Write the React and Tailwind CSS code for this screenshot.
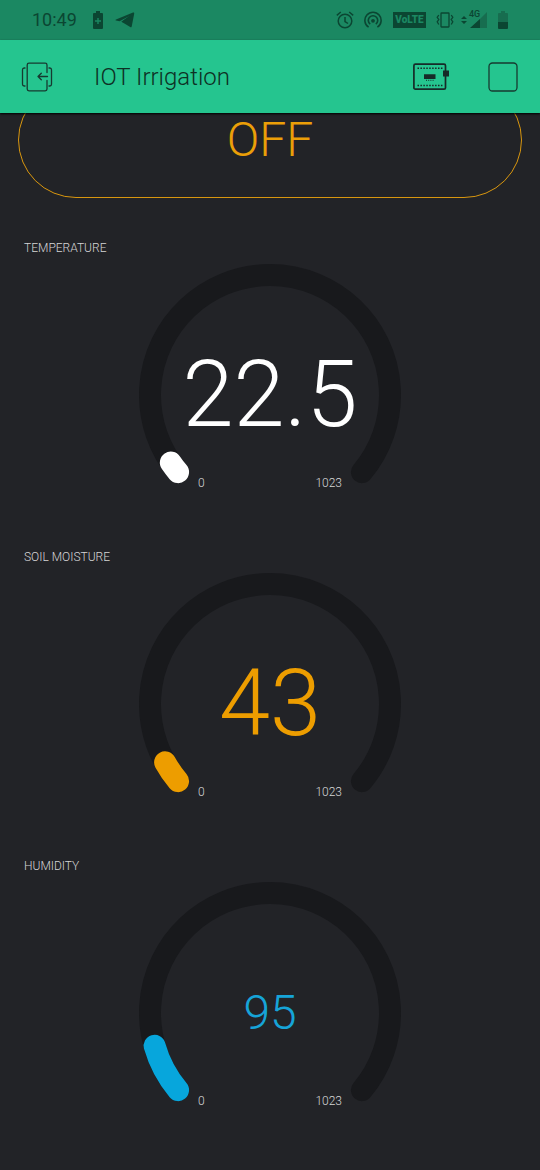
import React from "react";

const CENTER = 131;
const RADIUS = 120;
const SWEEP = 260;
const START = 140;

function pointAt(degrees) {
  const a = (degrees * Math.PI) / 180;
  return `${(CENTER + RADIUS * Math.cos(a)).toFixed(2)} ${(CENTER + RADIUS * Math.sin(a)).toFixed(2)}`;
}

function arc(sweep) {
  return `M${pointAt(START)}A${RADIUS} ${RADIUS} 0 ${sweep > 180 ? 1 : 0} 1 ${pointAt(START + sweep)}`;
}

function Gauge({ label, value, min = 0, max = 1023, color, valueClass }) {
  const filled = (SWEEP * (value - min)) / (max - min);
  return (
    <section className="flex flex-col gap-2">
      <h2 className="px-6 text-xs leading-4 font-light text-[#d5d5d6]">{label}</h2>
      <div className="mx-auto grid w-[262px]">
        <svg viewBox="0 0 262 262" className="col-start-1 row-start-1 w-full" fill="none" strokeWidth="22" strokeLinecap="round" aria-hidden="true">
          <path d={arc(SWEEP)} stroke="#18191c" />
          <path d={arc(filled)} stroke={color} />
        </svg>
        <p className={`col-start-1 row-start-1 self-center text-center leading-none font-light ${valueClass}`}>{value}</p>
        <div className="col-start-1 row-start-1 mb-[35px] flex justify-between self-end px-[59px] text-xs leading-4 font-light text-[#d5d5d6]">
          <span>{min}</span>
          <span>{max}</span>
        </div>
      </div>
    </section>
  );
}

function StatusBar() {
  return (
    <div className="flex h-10 items-center bg-[#1b8862] pr-8 pl-8 text-[#0b4632]">
      <span className="text-lg leading-6">10:49</span>
      <svg className="ml-4 h-[18px] w-[10px]" viewBox="0 0 10 18" fill="currentColor" aria-hidden="true">
        <path fillRule="evenodd" d="M3 0h4v2h2a1 1 0 0 1 1 1v14a1 1 0 0 1-1 1H1a1 1 0 0 1-1-1V3a1 1 0 0 1 1-1h2zM4.3 7v2.3H2v1.4h2.3V13h1.4v-2.3H8V9.3H5.7V7z" />
      </svg>
      <svg className="ml-3 h-4 w-5" viewBox="0 0 20 16" fill="currentColor" aria-hidden="true">
        <path d="M1 7.600 18 .6c.8-.3 1.400.2 1.200 1.200l-2.500 12.600c-.2.9-.8 1.100-1.500.7L6.500 9.700 14.500 3.900 4.600 9.200 1 8.500c-.7-.2-.7-.6 0-.9z" />
        <path d="M6.500 9.700 14.500 3.900 8.500 10.500z" />
      </svg>

      <div className="ml-auto flex items-center">
        <svg className="h-[18px] w-[18px]" viewBox="0 0 18 18" fill="none" stroke="currentColor" strokeWidth="1.500" aria-hidden="true">
          <circle cx="9" cy="10" r="6.800" />
          <path d="M.8 4.300 4.800 1M17.200 4.300 13.200 1M9 6v4.500l3 2" />
        </svg>
        <svg className="ml-[10px] h-[18px] w-[18px]" viewBox="0 0 18 18" fill="none" stroke="currentColor" strokeWidth="1.600" aria-hidden="true">
          <path d="M4.600 16.200a8.100 8.100 0 1 1 8.800 0M6.200 13.200a4.700 4.700 0 1 1 5.600 0" />
          <circle cx="9" cy="9.800" r="1.900" fill="currentColor" stroke="none" />
        </svg>
        <span className="ml-[11px] flex h-4 w-[33px] items-center justify-center bg-[#0b4632] text-[10px] leading-none font-black text-[#1b8862]">
          VoLTE
        </span>
        <svg className="ml-[10px] h-[18px] w-[18px]" viewBox="0 0 18 18" fill="none" stroke="currentColor" strokeWidth="1.300" aria-hidden="true">
          <rect x="5" y="2" width="8" height="14" rx="0.500" />
          <path d="m2.800 4-1.600 2.300 1.600 2.200-1.600 2.300L2.800 13.500M15.200 4l1.600 2.300-1.600 2.200 1.600 2.300-1.600 2.700" />
        </svg>
        <svg className="ml-[7px] h-2 w-[6px]" viewBox="0 0 6 8" fill="currentColor" aria-hidden="true">
          <path d="m3 0 3 3H0zM3 8 0 5h6z" />
        </svg>
        <span className="relative ml-[2px] block h-[18px] w-[18px]">
          <svg className="h-full w-full" viewBox="0 0 18 18" aria-hidden="true">
            <path d="M18 1v16H2z" fill="#176d4f" />
            <path d="M11 8v9H1z" fill="currentColor" />
          </svg>
          <span className="absolute -top-px left-0 bg-[#1b8862] text-[9px] leading-[9px] font-medium">4G</span>
        </span>
        <svg className="ml-[11px] h-[18px] w-[10px]" viewBox="0 0 10 18" aria-hidden="true">
          <path d="M3 0h4v2h2a1 1 0 0 1 1 1v8H0V3a1 1 0 0 1 1-1h2z" fill="#176d4f" />
          <path d="M0 11h10v6a1 1 0 0 1-1 1H1a1 1 0 0 1-1-1z" fill="currentColor" />
        </svg>
      </div>
    </div>
  );
}

function AppBar() {
  return (
    <header className="relative flex h-[73px] items-center bg-[#25c58f] pr-[22px] pl-[21px] text-[#173a30] shadow-[0_1px_2px_#000000]">
      <button type="button" aria-label="Exit project">
        <svg className="h-8 w-8" viewBox="0 0 32 32" fill="none" stroke="currentColor" strokeWidth="1.300" strokeLinecap="round" strokeLinejoin="round" aria-hidden="true">
          <path d="M26 11.500V4a1.800 1.800 0 0 0-1.800-1.800H8A1.800 1.800 0 0 0 6.200 4v24A1.800 1.800 0 0 0 8 29.800h16.200A1.800 1.800 0 0 0 26 28v-8.500" />
          <path d="M4 7H3.200A1.800 1.800 0 0 0 1.500 8.800v14.400A1.800 1.800 0 0 0 3.200 25H4M28 7h.8a1.800 1.800 0 0 1 1.700 1.800v14.400a1.800 1.800 0 0 1-1.700 1.800H28" />
          <path d="M26.500 15.500H17M20.300 12.200 17 15.500l3.300 3.300" />
        </svg>
      </button>
      <h1 className="ml-[41px] text-2xl leading-8 font-light text-[#0e3024]">IOT Irrigation</h1>
      <button type="button" aria-label="Devices" className="ml-auto">
        <svg className="h-7 w-[37px]" viewBox="0 0 37 28" fill="none" stroke="#162b28" aria-hidden="true">
          <rect x="0.900" y="1.200" width="31.600" height="25" rx="1.500" strokeWidth="1.700" />
          <path d="M4.500 5.200h25M4.500 22.500h25" strokeWidth="1.600" strokeDasharray="1.500 1.430" />
          <path d="M13 17.300h8" strokeWidth="1" strokeDasharray="1 1.200" />
          <path d="M11 11.200h11.500v4.800H11zM30 7.500h6v6h-6z" fill="#162b28" stroke="none" />
        </svg>
      </button>
      <button type="button" aria-label="Stop" className="ml-[38px]">
        <svg className="h-[30px] w-[30px]" viewBox="0 0 30 30" fill="none" stroke="#173a30" strokeWidth="1.300" aria-hidden="true">
          <rect x="1" y="1" width="28" height="28" rx="3.500" />
        </svg>
      </button>
    </header>
  );
}

export default function App() {
  return (
    <div className="flex min-h-screen flex-col bg-[#222327] font-['Roboto','Liberation_Sans',sans-serif]">
      <StatusBar />
      <AppBar />
      <main className="flex-1 overflow-hidden">
        {/* The switch is scrolled partly beneath the app bar. */}
        <div className="-mt-[31px] px-[18px]">
          <button type="button" className="h-[116px] w-full rounded-full border border-[#d8960f] text-5xl leading-none font-light text-[#eb9f08]">
            OFF
          </button>
        </div>
        <div className="mt-[42px] flex flex-col gap-[23px]">
          <Gauge label="TEMPERATURE" value={22.5} color="#ffffff" valueClass="text-[92px] text-white" />
          <Gauge label="SOIL MOISTURE" value={43} color="#ed9d00" valueClass="text-[92px] text-[#ed9d00]" />
          <Gauge label="HUMIDITY" value={95} color="#07a6dc" valueClass="text-5xl text-[#16a4d8]" />
        </div>
      </main>
    </div>
  );
}
